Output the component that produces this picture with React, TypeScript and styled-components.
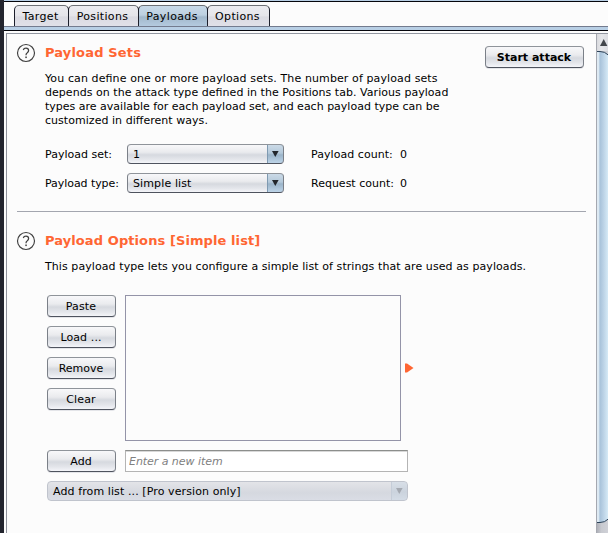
import React from "react";
import styled, { createGlobalStyle, css } from "styled-components";

const Global = createGlobalStyle`
  * { box-sizing: border-box; }
  html, body { margin: 0; padding: 0; overflow: hidden; }
  body {
    font: 11px/14px "DejaVu Sans", sans-serif;
    font-feature-settings: "liga" 1;
    color: #000;
    background: #fcfcfc;
  }
`;

const Frame = styled.div`
  display: flex;
  width: 608px;
  height: 533px;
  overflow: hidden;
  background: #fcfcfc;
`;
const DesktopEdge = styled.div`
  width: 4px;
  flex: none;
  background: #23252e;
`;
const Main = styled.div`
  flex: 1;
  min-width: 0;
  display: flex;
  flex-direction: column;
`;
const TopRule = styled.div`
  height: 2px;
  flex: none;
  background: #b8cfe5;
  border-bottom: 1px solid #05060c;
`;
const TabBar = styled.div`
  display: flex;
  flex: none;
  height: 24px;
  padding: 3px 0 0 10px;
`;
const Tab = styled.div<{ $w: number; $active?: boolean }>`
  width: ${(p) => p.$w}px;
  height: 22px;
  margin-right: -1px;
  padding-right: 2px;
  display: flex;
  justify-content: center;
  line-height: 22px;
  letter-spacing: 0.35px;
  white-space: nowrap;
  border: 1px solid #1c1f2b;
  border-top-color: #6d7075;
  border-bottom-color: #0c0e18;
  border-radius: 5px 5px 0 0;
  background: ${(p) =>
    p.$active
      ? "linear-gradient(#c9dae9 0%, #bdd0e0 45%, #a2b8cb 55%, #b4cadf 100%)"
      : "linear-gradient(#ececf0 0%, #e5e5ea 48%, #dbdbe2 55%, #e0e0e8 100%)"};
`;
const TabRule = styled.div`
  height: 5px;
  flex: none;
  background: #b8cfe5;
  border-top: 1px solid #737b8e;
  border-bottom: 1px solid #05060c;
`;
const Body = styled.div`
  flex: 1;
  min-height: 0;
  display: flex;
  margin: 2px 0 0 2px;
  border-left: 1px solid #8f929c;
  border-top: 1px solid #9297a1;
`;
const Content = styled.div`
  flex: 1;
  min-width: 0;
  padding: 9px 10px 0 10px;
`;
const SectionHead = styled.div`
  display: flex;
  align-items: flex-start;
  height: 29px;
`;
const HelpIcon = styled.svg`
  width: 20px;
  height: 20px;
  flex: none;
  margin: 0 9px 0 -1px;
`;
const Title = styled.h2<{ $ls: number }>`
  margin: 1px 0 0;
  flex: 1;
  font-size: 13px;
  line-height: 18px;
  font-weight: bold;
  letter-spacing: ${(p) => p.$ls}px;
  color: #ff6633;
`;
const Line = styled.div<{ $ls?: number }>`
  height: 14px;
  white-space: nowrap;
  letter-spacing: ${(p) => p.$ls ?? 0}px;
`;
const Paragraph = styled.div`
  margin-left: 28px;
`;
const surface = css`
  border: 1px solid #7b8088;
  border-top-color: #8f949a;
  border-bottom-color: #4e535e;
  border-radius: 4px;
  background: linear-gradient(#f8f8fa 0%, #eaebee 40%, #d6d9df 55%, #e4e6eb 80%, #f4f5f9 100%);
`;
const Button = styled.button<{ $w: number; $ls?: number; $bold?: boolean }>`
  ${surface}
  width: ${(p) => p.$w}px;
  height: 22px;
  flex: none;
  padding: 2px 1px 0 0;
  font: ${(p) => (p.$bold ? "bold " : "")}11px/18px "DejaVu Sans", sans-serif;
  letter-spacing: ${(p) => p.$ls ?? 0}px;
  color: #000;
  box-shadow: 0 1px 0 #e4e5e9;
`;
const StartButton = styled(Button)`
  margin: 3px 2px 0 0;
`;
const Fields = styled.div`
  display: grid;
  grid-template-columns: 82px 184px 89px auto;
  grid-auto-rows: 20px;
  row-gap: 9px;
  line-height: 22px;
  margin: 16px 0 0 28px;
  white-space: nowrap;
`;
const Label = styled.span<{ $ls?: number }>`
  letter-spacing: ${(p) => p.$ls ?? 0}px;
`;
const Select = styled.div<{ $w: number; $disabled?: boolean }>`
  ${surface}
  display: flex;
  width: ${(p) => p.$w}px;
  height: 20px;
  padding-left: 5px;
  line-height: 20px;
  overflow: hidden;
  ${(p) =>
    p.$disabled &&
    css`
      border-color: #c0c4cd;
      background: linear-gradient(#e3e4e8, #d5d8df 60%, #dadde5);
    `}
`;
const SelectText = styled.span<{ $ls?: number }>`
  flex: 1;
  white-space: nowrap;
  letter-spacing: ${(p) => p.$ls ?? 0}px;
`;
const Arrow = styled.span<{ $disabled?: boolean }>`
  width: 17px;
  margin: -1px -1px -1px 0;
  display: flex;
  align-items: center;
  justify-content: center;
  border: 1px solid ${(p) => (p.$disabled ? "#bcc5d0" : "#50697f")};
  border-left-color: ${(p) => (p.$disabled ? "#c5cdd8" : "#7f9ab1")};
  border-radius: 0 4px 4px 0;
  color: ${(p) => (p.$disabled ? "#a4a9b1" : "#22262b")};
  background: ${(p) =>
    p.$disabled
      ? "linear-gradient(#d8dfe7, #cbd3dd 55%, #d4dce6)"
      : "linear-gradient(#cbdae7 0%, #b4c9da 45%, #9bb4c9 55%, #bdd4e8 100%)"};
`;
const Divider = styled.hr`
  height: 1px;
  margin: 18px 0 19px;
  border: 0;
  background: #a3a6af;
`;
const ListRow = styled.div`
  display: flex;
  margin: 21px 0 0 30px;
  height: 146px;
`;
const ButtonColumn = styled.div`
  display: flex;
  flex-direction: column;
  gap: 9px;
  margin-right: 9px;
`;
const ListBox = styled.div`
  width: 276px;
  border: 1px solid #9494a8;
`;
const Marker = styled.svg`
  width: 9px;
  height: 10px;
  margin: 68px 0 0 4px;
`;
const AddRow = styled.div`
  display: flex;
  gap: 9px;
  margin: 9px 0 9px 30px;
`;
const Input = styled.input`
  width: 283px;
  height: 22px;
  padding: 0 3px;
  border: 1px solid #b4b4b4;
  border-top-color: #8c8e8c;
  border-radius: 0;
  background: linear-gradient(#d8d8d8 0, #d8d8d8 1px, #fff 1px);
  font: italic 11px "DejaVu Sans", sans-serif;
  letter-spacing: -0.05px;
  &::placeholder { color: #808080; opacity: 1; }
`;
const FromList = styled.div`
  margin-left: 30px;
`;
const ScrollBar = styled.div`
  width: 12px;
  flex: none;
  display: flex;
  flex-direction: column;
  border-left: 1px solid #a5a8b0;
  overflow: hidden;
  background: linear-gradient(90deg, #aeb0b8, #c8cad0 40%, #d0d1d7);
`;
const ScrollUp = styled.div`
  height: 17px;
  flex: none;
  background: linear-gradient(90deg, #d9dade, #e6e7ea 40%, #dddee3);
`;
const Thumb = styled.div`
  width: 17px;
  height: 472px;
  flex: none;
  margin-left: -2px;
  border: 1px solid #2d4359;
  border-radius: 2px 12px 12px 2px;
  background: linear-gradient(90deg, #b0c8de 0, #edf5fa 2px, #a9c3da 4px, #b9d0e4 7px, #d6eaf6 12px);
`;

const Help = () => (
  <HelpIcon viewBox="0 0 20 20">
    <circle cx="10" cy="10" r="8.5" fill="none" stroke="#404040" strokeWidth="1.15" />
    <path d="M7.3 7Q7.8 5.2 10 5.2Q12.6 5.2 12.6 7.5Q12.6 8.7 11.3 9.7Q10 10.6 10 12.2" fill="none" stroke="#404040" strokeWidth="1.25" />
    <rect x="9.3" y="13.5" width="1.5" height="1.6" fill="#404040" />
  </HelpIcon>
);

const Combo = ({ text, w, ls, disabled }: { text: string; w: number; ls?: number; disabled?: boolean }) => (
  <Select $w={w} $disabled={disabled}>
    <SelectText $ls={ls}>{text}</SelectText>
    <Arrow $disabled={disabled}>
      <svg width="7" height="6" viewBox="0 0 7 6"><path d="M0 0H6.6L3.3 6Z" fill="currentColor" /></svg>
    </Arrow>
  </Select>
);

export default function App() {
  return (
    <Frame>
      <Global />
      <DesktopEdge />
      <Main>
        <TopRule />
        <TabBar>
          <Tab $w={55}>Target</Tab>
          <Tab $w={71}>Positions</Tab>
          <Tab $w={70} $active>Payloads</Tab>
          <Tab $w={63}>Options</Tab>
        </TabBar>
        <TabRule />
        <Body>
          <Content>
            <SectionHead>
              <Help />
              <Title $ls={0.16}>Payload Sets</Title>
              <StartButton $w={99} $bold>Start attack</StartButton>
            </SectionHead>
            <Paragraph>
              <Line $ls={0.11}>You can define one or more payload sets. The number of payload sets</Line>
              <Line $ls={0.045}>depends on the attack type defined in the Positions tab. Various payload</Line>
              <Line>types are available for each payload set, and each payload type can be</Line>
              <Line $ls={0.04}>customized in different ways.</Line>
            </Paragraph>
            <Fields>
              <Label>Payload set:</Label>
              <Combo text="1" w={157} />
              <Label $ls={0.05}>Payload count:</Label>
              <Label>0</Label>
              <Label $ls={-0.06}>Payload type:</Label>
              <Combo text="Simple list" w={157} ls={0.12} />
              <Label>Request count:</Label>
              <Label>0</Label>
            </Fields>
            <Divider />
            <SectionHead>
              <Help />
              <Title $ls={0.09}>Payload Options [Simple list]</Title>
            </SectionHead>
            <Paragraph>
              <Line $ls={0.08}>This payload type lets you configure a simple list of strings that are used as payloads.</Line>
            </Paragraph>
            <ListRow>
              <ButtonColumn>
                <Button $w={69} $ls={0.15}>Paste</Button>
                <Button $w={69} $ls={0.1}>Load ...</Button>
                <Button $w={69}>Remove</Button>
                <Button $w={69} $ls={0.15}>Clear</Button>
              </ButtonColumn>
              <ListBox />
              <Marker viewBox="0 0 9 10"><path d="M0 .5H2L8.5 5L2 9.5H0Z" fill="#ff6633" /></Marker>
            </ListRow>
            <AddRow>
              <Button $w={69}>Add</Button>
              <Input placeholder="Enter a new item" />
            </AddRow>
            <FromList>
              <Combo text="Add from list ... [Pro version only]" w={361} ls={0.1} disabled />
            </FromList>
          </Content>
          <ScrollBar>
            <ScrollUp>
              <svg width="12" height="17" viewBox="0 0 12 17"><path d="M3 12L6.7 5L10.4 12Z" fill="#43474c" /></svg>
            </ScrollUp>
            <Thumb />
          </ScrollBar>
        </Body>
      </Main>
    </Frame>
  );
}
